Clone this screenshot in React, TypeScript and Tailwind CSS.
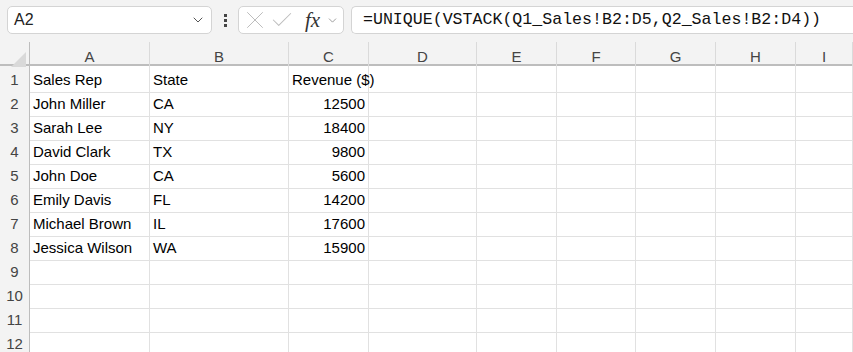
import { X, Check, ChevronDown } from "lucide-react";

const cols = ["A", "B", "C", "D", "E", "F", "G", "H", "I"];

const rows: [string, string, string][] = [
  ["Sales Rep", "State", "Revenue ($)"],
  ["John Miller", "CA", "12500"],
  ["Sarah Lee", "NY", "18400"],
  ["David Clark", "TX", "9800"],
  ["John Doe", "CA", "5600"],
  ["Emily Davis", "FL", "14200"],
  ["Michael Brown", "IL", "17600"],
  ["Jessica Wilson", "WA", "15900"],
  ["", "", ""],
  ["", "", ""],
  ["", "", ""],
  ["", "", ""],
];

const gridCols = "grid grid-cols-[30px_120px_139px_80px_108px_80px_79px_80px_80px_1fr]";

export default function App() {
  return (
    <div className="w-[853px] h-[352px] overflow-hidden bg-white font-['Liberation_Sans',sans-serif]">
      {/* formula bar */}
      <div className="h-[42px] bg-[#f3f3f3] flex items-start pt-[6px] pl-[7px]">
        <div className="w-[205px] h-[28px] bg-white border border-[#d4d4d4] rounded-[5px] flex items-center justify-between pl-[6px] pr-[5px]">
          <span className="text-[16px] text-[#222]">A2</span>
          <ChevronDown size={16} strokeWidth={1.5} className="text-[#555]" />
        </div>
        <div className="w-[26px] h-[28px] flex flex-col items-center justify-center gap-[2px]">
          <span className="w-[3px] h-[3px] bg-[#444]" />
          <span className="w-[3px] h-[3px] bg-[#444]" />
          <span className="w-[3px] h-[3px] bg-[#444]" />
        </div>
        <div className="w-[106px] h-[28px] bg-white border border-[#d4d4d4] rounded-[5px] flex items-center pl-[2px]">
          <span className="w-[27px] flex justify-center">
            <X size={30} strokeWidth={0.8} className="text-[#bdbdbd] shrink-0" />
          </span>
          <span className="w-[27px] flex justify-center">
            <Check size={26} strokeWidth={0.95} className="text-[#bdbdbd] shrink-0" />
          </span>
          <span className="ml-[10px] font-['Liberation_Serif',serif] italic text-[21px] text-[#333] leading-none">fx</span>
          <span className="w-[13px] ml-[6px] flex justify-center">
            <ChevronDown size={13} strokeWidth={1.5} className="text-[#888] shrink-0" />
          </span>
        </div>
        <div className="ml-[7px] flex-1 h-[28px] bg-white border border-[#d4d4d4] border-r-0 rounded-l-[5px] flex items-center pl-[11px]">
          <span className="font-['Liberation_Mono',monospace] text-[16.6px] text-[#111] whitespace-nowrap">
            =UNIQUE(VSTACK(Q1_Sales!B2:D5,Q2_Sales!B2:D4))
          </span>
        </div>
      </div>

      {/* column headers */}
      <div className={`${gridCols} h-[24px] bg-[#f3f3f3] border-b-2 border-[#bdbdbd]`}>
        <div className="relative border-r border-[#bdbdbd]">
          <div className="absolute right-[3px] bottom-[2px] w-0 h-0 border-l-[15px] border-l-transparent border-b-[15px] border-b-[#d9d9d9]" />
        </div>
        {cols.map((c) => (
          <div key={c} className="border-r border-[#dadada] flex items-center justify-center pt-[4px] text-[15px] text-[#444]">
            {c}
          </div>
        ))}
        <div />
      </div>

      {/* rows */}
      {rows.map((r, i) => (
        <div key={i} className={`${gridCols} h-[24px] text-[15px] text-black`}>
          <div className="bg-[#f3f3f3] border-r border-r-[#bdbdbd] border-b border-b-[#dadada] flex items-center justify-center pt-[3px] text-[#444]">
            {i + 1}
          </div>
          <div className="border-r border-b border-[#e1e1e1] flex items-center pt-[3px] pl-[3px] whitespace-nowrap">{r[0]}</div>
          <div className="border-r border-b border-[#e1e1e1] flex items-center pt-[3px] pl-[3px]">{r[1]}</div>
          <div
            className={`border-r border-b border-[#e1e1e1] flex items-center pt-[3px] whitespace-nowrap ${
              i === 0 ? "pl-[3px] justify-start" : "pr-[3px] justify-end"
            }`}
          >
            {r[2]}
          </div>
          {cols.slice(3).map((c) => (
            <div key={c} className="border-r border-b border-[#e1e1e1]" />
          ))}
          <div className="border-b border-[#e1e1e1]" />
        </div>
      ))}
    </div>
  );
}
